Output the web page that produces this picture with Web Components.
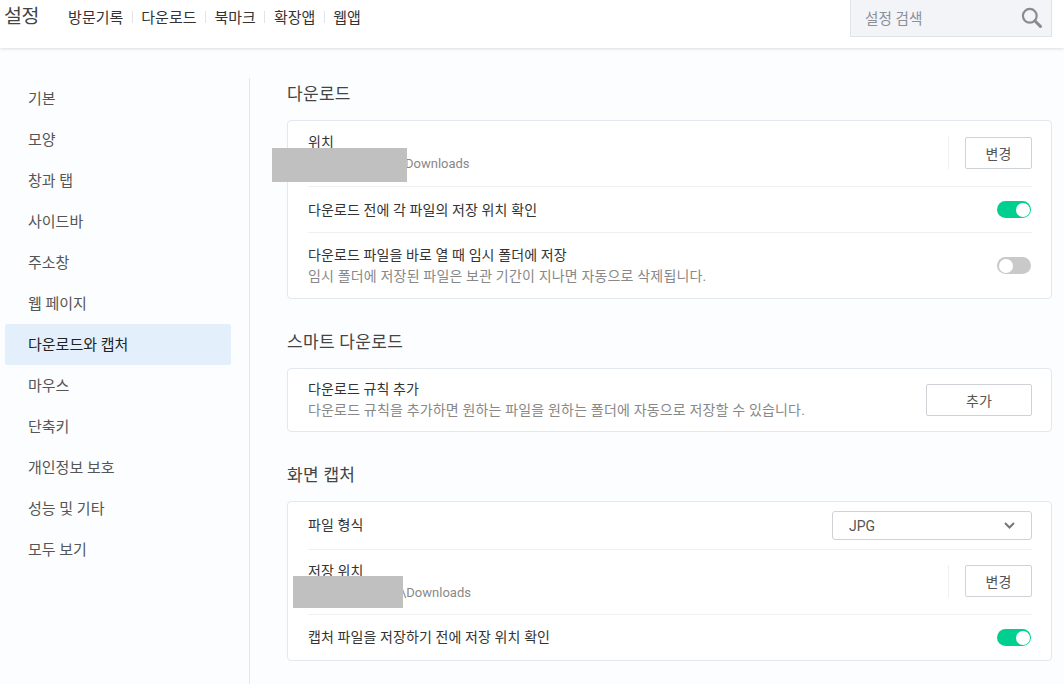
<!DOCTYPE html>
<html lang="ko"><head><meta charset="utf-8">
<style>
html,body{margin:0;padding:0;height:684px;overflow:hidden}
body{background:#fbfdfe;font-family:Roboto,"Noto Sans CJK KR",sans-serif;color:#333;font-size:14px}
</style></head><body>
<settings-app></settings-app>
<script>
function el(name, css, html, after){
  customElements.define(name, class extends HTMLElement{
    constructor(){super();this.attachShadow({mode:'open'}).innerHTML='<style>'+css+'</style>'+html;}
    connectedCallback(){ if(after) after(this); }
  });
}
el('top-bar',`:host{display:flex;height:48px;background:#fff;box-shadow:0 1px 3px rgba(0,0,0,.13);position:relative;padding:0 12px 0 4px;box-sizing:border-box;align-items:flex-start}
h1{font:400 19.5px/34px Roboto,"Noto Sans CJK KR",sans-serif;color:#444;margin:0 29px 0 0;letter-spacing:-.4px}
nav{display:flex;align-items:center;height:33px;flex:1}
.search{width:202px;height:37px;box-sizing:border-box;background:#f2f4f7;border:1px solid #e0e4ea;border-top:0;display:flex;align-items:center;justify-content:space-between;padding:0 9px 2px 14px;color:#8a8f98;font-size:14.6px}
svg{display:block;margin-top:1px}`,
`<h1>설정</h1><nav><slot></slot></nav><div class="search"><span>설정 검색</span><svg width="21" height="21" viewBox="0 0 21 21" fill="none" stroke="#8b8b8b"><circle cx="8.8" cy="8.8" r="6.9" stroke-width="2.2"/><path d="M13.8 13.8l5.6 5.6" stroke-width="3" stroke-linecap="round"/></svg></div>`);
el('top-link',`:host{display:flex;align-items:center;font-size:15px;color:#333;white-space:nowrap}
:host(:not(:last-child))::after{content:"";width:1px;height:12px;background:#e2e4e8;margin:0 8.5px}`,`<slot></slot>`);
el('side-nav',`:host{display:block;width:250px;height:606px;box-sizing:border-box;border-right:1px solid #e3e7ec;margin-top:30px;padding:0 18px 0 5px;flex:none}`,`<slot></slot>`);
el('side-item',`:host{display:block;height:41px;line-height:42px;padding-left:23px;font-size:15px;color:#555;border-radius:2px}
:host([active]){background:#e3f0fb;color:#222}`,`<slot></slot>`);
el('main-pane',`:host{display:block;flex:1;padding:32px 12px 0 37px;min-width:0}`,`<slot></slot>`);
el('set-section',`:host{display:block;position:relative;margin-bottom:29px}
h2{font:400 17px/27px Roboto,"Noto Sans CJK KR",sans-serif;color:#444;margin:0 0 12px;padding-top:1px;letter-spacing:.3px}
.card{background:#fff;border:1px solid #e3e7ee;border-radius:4px;padding:0 19px 0 20px}`,
`<h2></h2><div class="card"><slot></slot></div>`,
n=>{n.shadowRoot.querySelector('h2').textContent=n.getAttribute('heading');});
el('set-row',`:host{display:flex;align-items:center;justify-content:space-between;border-bottom:1px solid #eef0f3;box-sizing:border-box}
:host(:last-child){border-bottom:0}
.t{min-width:0;padding-top:var(--tp,0)}
.m{font-size:14px;line-height:21px;color:#333;letter-spacing:.1px}
.s{font-size:14px;line-height:21px;color:#888;letter-spacing:.17px}
.r{display:flex;align-items:center}`,
`<div class="t"><div class="m"><slot name="m"></slot></div><div class="s"><slot name="s"></slot></div></div><div class="r"><slot></slot></div>`);
el('set-toggle',`:host{display:block;width:34px;height:17px;border-radius:9px;background:#00d08f;position:relative;margin-right:1px}
:host::after{content:"";position:absolute;right:1px;top:1.5px;width:14px;height:14px;border-radius:50%;background:#fff}
:host([off]){background:#c9c9c9}
:host([off])::after{right:auto;left:2px}`,``);
el('set-button',`:host{display:flex;align-items:center;justify-content:center;height:32px;width:67px;box-sizing:border-box;border:1px solid #cfd2d6;border-radius:2px;background:#fff;font-size:14px;color:#555}`,`<slot></slot>`);
el('set-divider',`:host{display:block;width:1px;height:33px;background:#eef0f3;margin-right:16px}`,``);
el('set-select',`:host{display:flex;align-items:center;justify-content:space-between;width:200px;height:29px;box-sizing:border-box;border:1px solid #cfd2d6;border-radius:3px;background:#fff;padding:0 16px;color:#555;font-size:14px}`,
`<slot></slot><svg width="11" height="7" viewBox="0 0 11 7" fill="none" stroke="#777" stroke-width="2"><path d="M1 1l4.5 4.5L10 1"/></svg>`);
el('redact-box',`:host{display:block;position:absolute;background:#c0c0c0}`,``);
el('settings-app',`:host{display:block;position:relative}.b{display:flex}`,
`<top-bar><top-link>방문기록</top-link><top-link>다운로드</top-link><top-link>북마크</top-link><top-link>확장앱</top-link><top-link>웹앱</top-link></top-bar>
<div class="b"><side-nav>
<side-item>기본</side-item><side-item>모양</side-item><side-item>창과 탭</side-item><side-item>사이드바</side-item><side-item>주소창</side-item><side-item>웹 페이지</side-item><side-item active>다운로드와 캡처</side-item><side-item>마우스</side-item><side-item>단축키</side-item><side-item>개인정보 보호</side-item><side-item>성능 및 기타</side-item><side-item>모두 보기</side-item>
</side-nav><main-pane>
<set-section heading="다운로드">
<set-row style="height:66px;padding-bottom:2px"><span slot="m">위치</span><span slot="s" style="padding-left:97px;font-size:13px;letter-spacing:0">Downloads</span><set-divider></set-divider><set-button>변경</set-button></set-row>
<set-row style="height:46px;--tp:2px"><span slot="m">다운로드 전에 각 파일의 저장 위치 확인</span><set-toggle></set-toggle></set-row>
<set-row style="height:65px"><span slot="m">다운로드 파일을 바로 열 때 임시 폴더에 저장</span><span slot="s">임시 폴더에 저장된 파일은 보관 기간이 지나면 자동으로 삭제됩니다.</span><set-toggle off></set-toggle></set-row>
</set-section>
<set-section heading="스마트 다운로드">
<set-row style="height:62px"><span slot="m">다운로드 규칙 추가</span><span slot="s">다운로드 규칙을 추가하면 원하는 파일을 원하는 폴더에 자동으로 저장할 수 있습니다.</span><set-button style="width:106px">추가</set-button></set-row>
</set-section>
<set-section heading="화면 캡처">
<set-row style="height:48px"><span slot="m">파일 형식</span><set-select>JPG</set-select></set-row>
<set-row style="height:65px;padding-bottom:2px;--tp:2px"><span slot="m">저장 위치</span><span slot="s" style="padding-left:93px;font-size:13px;letter-spacing:0">\\Downloads</span><set-divider></set-divider><set-button>변경</set-button></set-row>
<set-row style="height:45px"><span slot="m">캡처 파일을 저장하기 전에 저장 위치 확인</span><set-toggle></set-toggle></set-row>
</set-section>
</main-pane></div>
<redact-box style="left:272px;top:148px;width:135px;height:34px"></redact-box>
<redact-box style="left:293px;top:576px;width:110px;height:32px"></redact-box>`);
</script>
</body></html>
